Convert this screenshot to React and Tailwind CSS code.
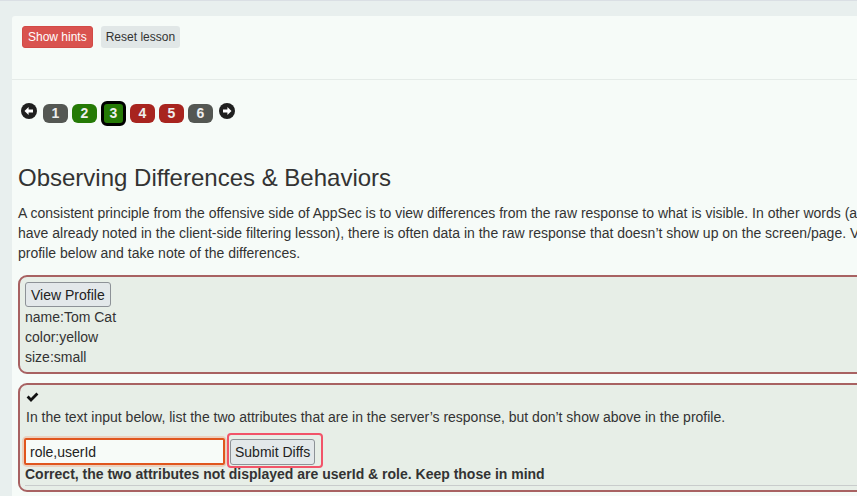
import React from 'react'

const pages = [
  { n: 1, color: 'bg-[#545753]' },
  { n: 2, color: 'bg-[#257a06]' },
  { n: 3, color: 'bg-[#257a06]', active: true },
  { n: 4, color: 'bg-[#a8241f]' },
  { n: 5, color: 'bg-[#a8241f]' },
  { n: 6, color: 'bg-[#545753]' },
]

function Arrow({ dir }) {
  return (
    <svg width="16" height="16" viewBox="0 0 16 16" className="mt-[2px]">
      <circle cx="8" cy="8" r="8" fill="#1f1f1f" />
      {dir === 'left' ? (
        <path d="M3.5 8 L7.6 4 L7.6 6.6 L12 6.6 L12 9.4 L7.6 9.4 L7.6 12 Z" fill="#fff" />
      ) : (
        <path d="M12.5 8 L8.4 4 L8.4 6.6 L4 6.6 L4 9.4 L8.4 9.4 L8.4 12 Z" fill="#fff" />
      )}
    </svg>
  )
}

export default function App() {
  return (
    <div className="w-[857px] h-[496px] overflow-hidden bg-[#e8efee] border-t border-[#dadfe4] font-['Liberation_Sans',Arial,sans-serif] text-[#333]">
      <div className="ml-3 mt-[15px] w-[960px] bg-[#f6fbf8] rounded-tl-[3px] pb-10">
        {/* lesson buttons */}
        <div className="h-[64px] px-[10px] pt-[10px] border-b border-[#e5ebe8] flex items-start gap-2">
          <button className="h-[22px] px-[5px] rounded-[3px] bg-[#d9534f] border border-[#d24a46] text-white text-[12px] leading-none">
            Show hints
          </button>
          <button className="h-[22px] px-[5px] rounded-[3px] bg-[#e1e7e7] text-[#333] text-[12px] leading-none">
            Reset lesson
          </button>
        </div>

        <div className="px-[6px]">
          {/* pagination */}
          <div className="mt-[21px] pl-[3px] flex items-start h-[25px]">
            <Arrow dir="left" />
            <div className="flex items-start gap-[4px] ml-[6px]">
              {pages.map(p =>
                p.active ? (
                  <div key={p.n} className={`w-[25px] h-[25px] rounded-[6px] border-[3px] border-black ${p.color} text-[#eee] font-bold text-[14px] flex items-center justify-center`}>
                    {p.n}
                  </div>
                ) : (
                  <div key={p.n} className={`mt-[3px] w-[25px] h-[19px] rounded-[6px] ${p.color} text-[#eee] font-bold text-[14px] flex items-center justify-center`}>
                    {p.n}
                  </div>
                )
              )}
            </div>
            <div className="ml-[6px]">
              <Arrow dir="right" />
            </div>
          </div>

          <h3 className="mt-[39px] text-[24px] leading-[1.1] text-[#333]">Observing Differences &amp; Behaviors</h3>

          <p className="mt-[12px] whitespace-nowrap text-[14px] leading-[20px]">
            A consistent principle from the offensive side of AppSec is to view differences from the raw response to what is visible. In other words (as we<br />
            have already noted in the client-side filtering lesson), there is often data in the raw response that doesn’t show up on the screen/page. View the<br />
            profile below and take note of the differences.
          </p>

          {/* profile box */}
          <div className="mt-[12px] border-2 border-[#a86262] rounded-[9px] bg-[#e7eee7] p-[5px] text-[14px] leading-[20px]">
            <button className="h-[25px] px-[5px] border border-[#8d9297] rounded-[3px] bg-[#e3e8ea] text-[14px] text-[#222]">
              View Profile
            </button>
            <div>name:Tom Cat</div>
            <div>color:yellow</div>
            <div>size:small</div>
          </div>

          {/* attempt box */}
          <div className="mt-[9px] border-2 border-[#a86262] rounded-[9px] bg-[#e7eee7] px-[5px] pt-[7px] pb-[4px] text-[14px] leading-[20px]">
            <div className="h-[15px] pl-[1px]">
              <svg width="13" height="11" viewBox="0 0 13 11">
                <path d="M0.6 5.6 L2.6 3.6 L5 6 L10.4 0.6 L12.4 2.6 L5 10 Z" fill="#111" />
              </svg>
            </div>
            <div className="pl-[1px]">
              In the text input below, list the two attributes that are in the server’s response, but don’t show above in the profile.
            </div>
            <div className="mt-[6px] flex items-start">
              <div className="mt-[5px] ml-[-1px] rounded-[3px] shadow-[0_0_0_2px_rgba(240,170,140,0.45)]">
                <input
                  defaultValue="role,userId"
                  className="block w-[201px] h-[27px] border-2 border-[#e0561e] rounded-[2px] bg-[#f7fbf8] px-[4px] text-[14px] text-[#222] outline-none"
                />
              </div>
              <div className="ml-[2px] border-2 border-[#f25469] rounded-[4px] pl-[1px] pt-[4px] pr-[6px] pb-[1px]">
                <button className="h-[26px] px-[4px] border border-[#8d9297] rounded-[3px] bg-[#e3e8ea] text-[14px] text-[#222]">
                  Submit Diffs
                </button>
              </div>
            </div>
            <div className="font-bold leading-[17px] mt-[-2px]">
              Correct, the two attributes not displayed are userId &amp; role. Keep those in mind
            </div>
            <div className="mt-[2px] border-t border-[#c9cccc]" />
          </div>
        </div>
      </div>
    </div>
  )
}
